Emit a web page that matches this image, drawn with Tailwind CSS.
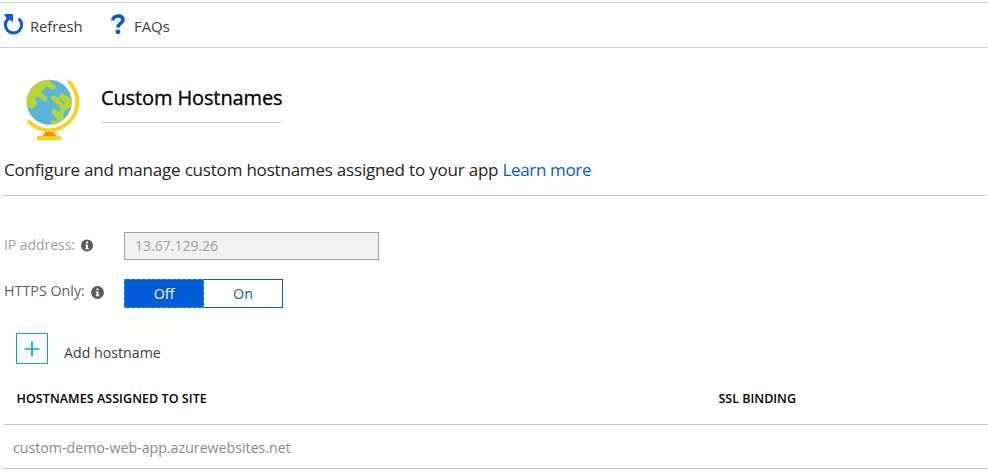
<!DOCTYPE html>
<html lang="en">
<head>
<meta charset="utf-8">
<title>Custom Hostnames</title>
<script src="https://cdn.jsdelivr.net/npm/@tailwindcss/browser@4"></script>
</head>
<body class="bg-white">
<div class="w-[988px] h-[472px] overflow-hidden bg-white font-['Open_Sans','Noto_Sans',sans-serif] text-[#3c3c3c] whitespace-nowrap">
  <nav class="mt-[2px] h-[46px] border-y border-[#d2d2d2] flex items-start">
    <svg class="w-[21px] h-[21px] mt-[11px] ml-[3px]" viewBox="0 0 21 21" fill="none"><path d="M5.4 4.6A8.1 8.1 0 1 0 15.6 4.6" stroke="#015cda" stroke-width="3"/><path d="M1 0H10V8.6L7.4 6L4.5 6.5L3 3.5Z" fill="#015cda"/></svg>
    <span class="ml-[6px] mt-[13px] text-[14.7px] leading-[20px] w-[80px]">Refresh</span>
    <svg class="w-[15px] h-[21px] mt-[11px] ml-[1px]" viewBox="0 0 15 21" fill="none"><path d="M1.8 6.6C1.8 3.5 4.3 2 7.2 2C10.2 2 12 3.4 12 5.8C12 9.2 7 9.2 7 13.6" stroke="#015cda" stroke-width="3.6"/><circle cx="6.9" cy="17.8" r="2.4" fill="#015cda"/></svg>
    <span class="ml-[8px] mt-[13px] text-[14.9px] leading-[20px]">FAQs</span>
  </nav>
  <header class="h-[100px] flex">
    <svg class="w-[56px] h-[64px] mt-[30px] ml-[25px]" viewBox="0 0 56 64">
      <defs><clipPath id="globe"><circle cx="24.2" cy="24.2" r="22.5"/></clipPath></defs>
      <circle cx="24.2" cy="24.2" r="22.5" fill="#59b4d9"/>
      <g clip-path="url(#globe)" fill="#b8d432">
        <path d="M0 0H27L25 4L30 7C32.5 9.5 30 12.5 27 11.5L22 8.5C19.5 9 20 11 18 12C15.5 13.5 17 15.5 19 17L22 19C24 22 20.5 24.5 17.5 22.5L15 20C12 18 9.5 19.5 10.5 22.5C13 25 11 27.5 10 28.5C8 31.5 5 31 2 28L0 25Z"/>
        <path d="M35.5 16C37.5 14.5 39 16 41 18L50 19V26L46 29C44 31 41 31.5 39.5 33C37.5 35 38.5 37 38 38.5C39.5 41 37 43.5 35 42L33 50H27L25.5 43.5C26.5 41.5 29 42.5 31 43.5C33 42 32 40 28.5 37C25.5 35 26 31 29.5 31L33.5 34C36 33 36.5 31.5 35 29.5L27.5 22.5C24.5 20 27 16.5 30 18L33 20C35.5 20.5 33 17.5 35.5 16Z"/>
        <path d="M31.5 35L37 40.3" fill="none" stroke="#b8d432" stroke-width="4.6" stroke-linecap="round"/>
        <path d="M35.5 22L39 25.5" fill="none" stroke="#59b4d9" stroke-width="1.5" stroke-linecap="round"/>
      </g>
      <path d="M44.2 4.1A28 28 0 0 1 4.3 43.8" fill="none" stroke="#fcd116" stroke-width="3.8" stroke-linecap="round"/>
      <path d="M20 54H29Q30 57.5 33.5 58.5H15.5Q19 57.5 20 54Z" fill="#ff8c00"/>
      <rect x="12" y="58" width="24" height="4" fill="#fcd116"/>
    </svg>
    <h1 class="ml-[20px] mt-[35px] w-[181px] h-[40px] border-b border-[#c8c8c8] text-[20px] leading-[30px] tracking-[-0.12px] [-webkit-text-stroke:0.3px_black] text-black">Custom Hostnames</h1>
  </header>
  <p class="ml-[4px] w-[982px] h-[48px] pt-[10px] border-b border-[#c8c8c8] text-[17px] leading-[24px] tracking-[-0.22px] text-[#242424]"><span class="tracking-[-0.2px]">Configure and manage custom hostnames assigned to your app</span> <a class="text-[#015cda] tracking-[-0.35px]">Learn more</a></p>
  <div class="mt-[36px] ml-[4px] h-[28px] flex">
    <label class="w-[72px] pt-[3px] text-[14px] leading-[20px] tracking-[-0.05px] text-[#a0a0a0]">IP address:</label>
    <svg class="ml-[5px] mt-[7px] w-[12px] h-[13px]" viewBox="0 0 12 13"><circle cx="6" cy="6.5" r="6" fill="#5a5a5a"/><path d="M5 2.5H7V4.3H5ZM4.3 5.4H7V9.1H7.8V10.2H4.3V9.1H5V6.5H4.3Z" fill="#fff"/></svg>
    <div class="ml-[31px] w-[255px] border border-[#a0a0a0] bg-[#f1f1f1] pl-[10px] text-[14px] leading-[26px] text-[#a0a0a0]">13.67.129.26</div>
  </div>
  <div class="mt-[19px] ml-[4px] h-[29px] flex">
    <label class="w-[82px] pt-[2px] text-[14.3px] leading-[20px] text-[#5f5f5f]">HTTPS Only:</label>
    <svg class="ml-[5px] mt-[7px] w-[13px] h-[13px]" viewBox="0 0 13 13"><circle cx="6.5" cy="6.5" r="6.4" fill="#5a5a5a"/><path d="M5.5 2.5H7.5V4.3H5.5ZM4.8 5.4H7.5V9.1H8.3V10.2H4.8V9.1H5.5V6.5H4.8Z" fill="#fff"/></svg>
    <div class="ml-[20px] w-[159px] flex text-[14.3px] leading-[27px] text-center">
      <div class="w-[80px] bg-[#015cda] border border-dashed border-[#12a8f0] text-white">Off</div>
      <div class="w-[79px] border border-l-0 border-[#015cda] text-[#015cda]">On</div>
    </div>
  </div>
  <div class="mt-[25px] ml-[16px] h-[31px] flex">
    <div class="w-[32px] border border-[#00a1f1] flex items-center justify-center"><svg class="w-[16px] h-[16px]" viewBox="0 0 16 16"><path d="M8 .5V15.5M.5 8H15.5" stroke="#00a1f1" stroke-width="1.7"/></svg></div>
    <span class="ml-[16px] mt-[10px] text-[14.2px] leading-[20px]">Add hostname</span>
  </div>
  <div class="ml-[4px] h-[61px] border-b border-[#c8c8c8] flex pt-[25px] pl-[12.5px] text-[12.5px] leading-[20px] font-semibold text-black">
    <div class="w-[702px] tracking-[0.06px]">HOSTNAMES ASSIGNED TO SITE</div><div>SSL BINDING</div>
  </div>
  <div class="ml-[4px] h-[44px] border-b border-[#c8c8c8] pl-[9px] pt-[13px] text-[14.2px] leading-[20px] text-[#8a8a8a]">custom-demo-web-app.azurewebsites.net</div>
</div>
</body>
</html>
